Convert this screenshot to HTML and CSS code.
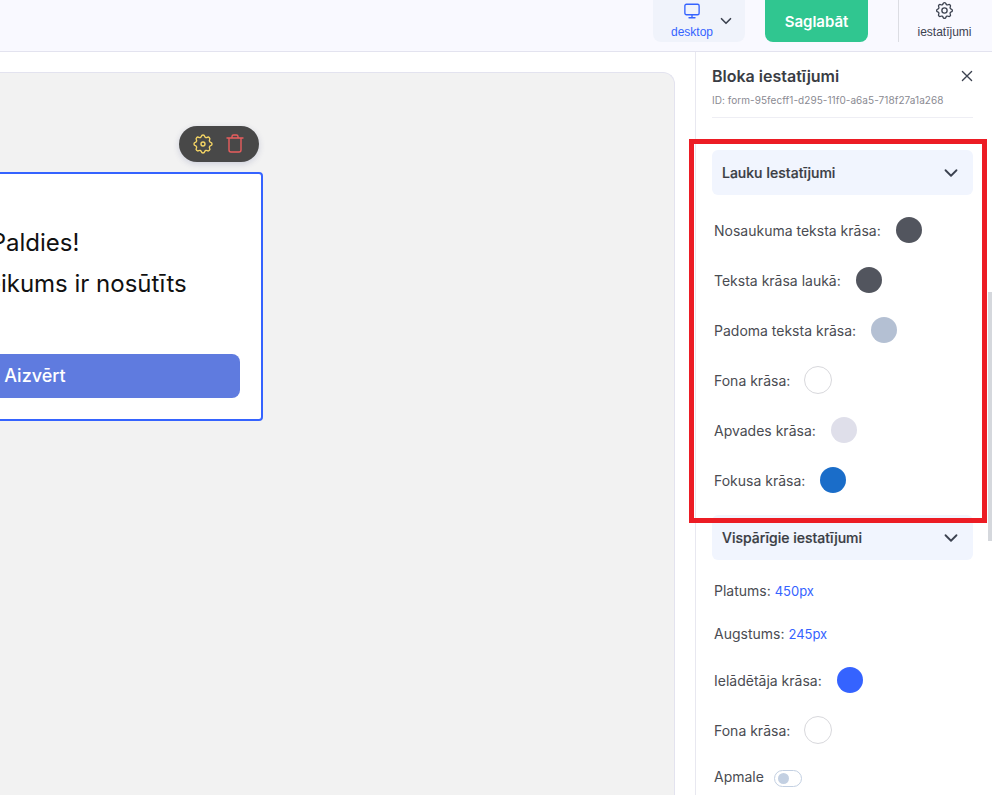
FILE: index.html
```html
<!DOCTYPE html>
<html>
<head>
    <meta charset="UTF-8">
    <title>Bloka iestatījumi</title>
    <link rel="stylesheet" href="styles.css">
</head>
<body>
    <header class="topbar">
        <div class="device">
            <div class="device-label">
                <svg width="18" height="18" viewBox="0 0 24 24" fill="none" stroke="#3563ff" stroke-width="1.800" stroke-linecap="round" stroke-linejoin="round"><rect x="2.500" y="3" width="19" height="14" rx="2"/><path d="M8 21h8M12 17v4"/></svg>
                <span>desktop</span>
            </div>
            <svg class="chevron" width="18" height="18" viewBox="0 0 24 24" fill="none" stroke="#3c4250" stroke-width="2.200" stroke-linecap="round" stroke-linejoin="round"><path d="M6 9l6 6 6-6"/></svg>
        </div>
        <button class="save">Saglabāt</button>
        <div class="settings">
            <svg width="21" height="21" viewBox="0 0 24 24" fill="none" stroke="#3c4250" stroke-width="1.500" stroke-linecap="round" stroke-linejoin="round"><path d="M10.325 4.317c.426-1.756 2.924-1.756 3.350 0a1.724 1.724 0 0 0 2.573 1.066c1.543-.94 3.310.826 2.370 2.370a1.724 1.724 0 0 0 1.065 2.572c1.756.426 1.756 2.924 0 3.350a1.724 1.724 0 0 0-1.066 2.573c.94 1.543-.826 3.310-2.370 2.370a1.724 1.724 0 0 0-2.572 1.065c-.426 1.756-2.924 1.756-3.350 0a1.724 1.724 0 0 0-2.573-1.066c-1.543.94-3.310-.826-2.370-2.370a1.724 1.724 0 0 0-1.065-2.572c-1.756-.426-1.756-2.924 0-3.350a1.724 1.724 0 0 0 1.066-2.573c-.94-1.543.826-3.310 2.370-2.370 1 .608 2.296.07 2.572-1.065z"/><circle cx="12" cy="12" r="3"/></svg>
            <span>iestatījumi</span>
        </div>
    </header>

    <div class="main">
        <div class="canvas-area">
            <div class="canvas">
                <div class="block">
                    <div class="block-tools">
                        <svg width="24" height="24" viewBox="0 0 24 24" fill="none" stroke="#f5d565" stroke-width="1.400" stroke-linecap="round" stroke-linejoin="round"><path d="M10.325 4.317c.426-1.756 2.924-1.756 3.350 0a1.724 1.724 0 0 0 2.573 1.066c1.543-.94 3.310.826 2.370 2.370a1.724 1.724 0 0 0 1.065 2.572c1.756.426 1.756 2.924 0 3.350a1.724 1.724 0 0 0-1.066 2.573c.94 1.543-.826 3.310-2.370 2.370a1.724 1.724 0 0 0-2.572 1.065c-.426 1.756-2.924 1.756-3.350 0a1.724 1.724 0 0 0-2.573-1.066c-1.543.94-3.310-.826-2.370-2.370a1.724 1.724 0 0 0-1.065-2.572c-1.756-.426-1.756-2.924 0-3.350a1.724 1.724 0 0 0 1.066-2.573c-.94-1.543.826-3.310 2.370-2.370 1 .608 2.296.07 2.572-1.065z"/><circle cx="12" cy="12" r="2"/></svg>
                        <svg width="24" height="24" viewBox="0 0 24 24" fill="none" stroke="#e85d5d" stroke-width="1.400" stroke-linecap="round" stroke-linejoin="round"><path d="M4 6h16M9 6V4.500A1.500 1.500 0 0 1 10.500 3h3A1.500 1.500 0 0 1 15 4.500V6M6 6v12a2 2 0 0 0 2 2h8a2 2 0 0 0 2-2V6"/></svg>
                    </div>
                    <div class="thanks">
                        <p>Paldies!</p>
                        <p>Jūsu pieteikums ir nosūtīts</p>
                    </div>
                    <button class="close-btn">Aizvērt</button>
                </div>
            </div>
        </div>

        <aside class="sidebar">
            <div class="side-head">
                <div class="side-title">
                    <h2>Bloka iestatījumi</h2>
                    <svg class="close-x" width="20" height="20" viewBox="0 0 24 24" fill="none" stroke="#3c4250" stroke-width="1.600" stroke-linecap="round"><path d="M6.500 6.500l11 11M17.500 6.500l-11 11"/></svg>
                </div>
                <p class="block-id">ID: form-95fecff1-d295-11f0-a6a5-718f27a1a268</p>
            </div>

            <div class="section">
                <span>Lauku Iestatījumi</span>
                <svg width="22" height="22" viewBox="0 0 24 24" fill="none" stroke="#3c4250" stroke-width="2" stroke-linecap="round" stroke-linejoin="round"><path d="M6 9l6 6 6-6"/></svg>
            </div>
            <div class="rows">
                <div class="row"><span>Nosaukuma teksta krāsa:</span><i class="swatch c-dark"></i></div>
                <div class="row"><span>Teksta krāsa laukā:</span><i class="swatch c-dark"></i></div>
                <div class="row"><span>Padoma teksta krāsa:</span><i class="swatch c-hint"></i></div>
                <div class="row"><span>Fona krāsa:</span><i class="swatch c-white"></i></div>
                <div class="row"><span>Apvades krāsa:</span><i class="swatch c-border"></i></div>
                <div class="row"><span>Fokusa krāsa:</span><i class="swatch c-focus"></i></div>
            </div>

            <div class="section section-second">
                <span>Vispārīgie iestatījumi</span>
                <svg width="22" height="22" viewBox="0 0 24 24" fill="none" stroke="#3c4250" stroke-width="2" stroke-linecap="round" stroke-linejoin="round"><path d="M6 9l6 6 6-6"/></svg>
            </div>
            <div class="values">
                <div class="value-row">Platums: <a href="#">450px</a></div>
                <div class="value-row">Augstums: <a href="#">245px</a></div>
            </div>
            <div class="rows rows-tight">
                <div class="row"><span>Ielādētāja krāsa:</span><i class="swatch c-loader"></i></div>
                <div class="row"><span>Fona krāsa:</span><i class="swatch c-white"></i></div>
                <div class="row row-short"><span>Apmale</span><i class="toggle"><b></b></i></div>
            </div>
        </aside>
    </div>

    <div class="highlight"></div>
    <div class="scrollbar"></div>
</body>
</html>
```

FILE: styles.css
```css
* {
    margin: 0;
    padding: 0;
    box-sizing: border-box;
}
html, body {
    height: 795px;
    overflow: hidden;
}
body {
    font-family: Inter, "Liberation Sans", sans-serif;
    color: #3a3d44;
    background-color: #fff;
}
.topbar {
    display: flex;
    justify-content: flex-end;
    height: 52px;
    background-color: #f9f9ff;
    border-bottom: 1px solid #e3e3ef;
}
.device {
    display: flex;
    align-items: center;
    gap: 4px;
    width: 92px;
    height: 42px;
    padding-left: 18px;
    margin-right: 20px;
    background-color: #f0f3fb;
    border-radius: 0 0 8px 8px;
}
.device-label {
    display: flex;
    flex-direction: column;
    align-items: center;
    gap: 5px;
    padding-bottom: 2px;
    font-family: "Liberation Sans", sans-serif;
    font-size: 12px;
    color: #3563ff;
}
.save {
    width: 103px;
    height: 42px;
    margin-right: 30px;
    border: 0;
    border-radius: 0 0 8px 8px;
    background-color: #30c690;
    color: #fff;
    font-family: Inter, sans-serif;
    font-size: 15px;
    font-weight: 600;
}
.settings {
    display: flex;
    flex-direction: column;
    align-items: center;
    gap: 4px;
    width: 94px;
    height: 42px;
    padding-right: 2px;
    border-left: 1px solid #dcdde3;
    font-family: "Liberation Sans", sans-serif;
    font-size: 12px;
    color: #3c4250;
}
.main {
    display: flex;
    height: 743px;
}
.canvas-area {
    flex: 1;
    padding: 20px 20px 0 0;
}
.canvas {
    position: relative;
    height: 100%;
    background-color: #f2f2f2;
    border: 1px solid #e3e3ef;
    border-left: 0;
    border-bottom: 0;
    border-radius: 0 12px 0 0;
}
.block {
    position: absolute;
    left: -187px;
    top: 99px;
    display: flex;
    flex-direction: column;
    align-items: center;
    width: 450px;
    height: 249px;
    padding: 48px 21px 21px 15px;
    background-color: #fff;
    border: 2px solid #3563ff;
    border-radius: 4px;
}
.block-tools {
    position: absolute;
    top: -48px;
    right: 2px;
    display: flex;
    align-items: center;
    justify-content: center;
    gap: 8px;
    width: 80px;
    height: 36px;
    border-radius: 18px;
    background-color: #484848;
    box-shadow: 0 2px 6px rgba(60, 70, 130, .2);
}
.thanks {
    flex: 1;
    font-size: 24px;
    line-height: 41px;
    color: #111;
    text-align: center;
}
.close-btn {
    width: 100%;
    height: 44px;
    padding-bottom: 2px;
    border: 0;
    border-radius: 8px;
    background-color: #5f7bdf;
    color: #fff;
    font-family: Inter, sans-serif;
    font-size: 18px;
    font-weight: 500;
}
.sidebar {
    width: 297px;
    padding: 0 19px 0 16px;
    background-color: #fff;
    border-left: 1px solid #e8e8f0;
}
.side-head {
    height: 66px;
    margin-bottom: 32px;
    padding-top: 14px;
    border-bottom: 1px solid #eeeef4;
}
.side-title {
    display: flex;
    align-items: center;
    justify-content: space-between;
}
.side-title h2 {
    font-size: 16px;
    font-weight: 600;
    line-height: 20px;
}
.close-x {
    margin-right: -4px;
}
.block-id {
    margin-top: 8px;
    font-size: 10px;
    letter-spacing: .05px;
    color: #8a8a92;
}
.section {
    display: flex;
    align-items: center;
    justify-content: space-between;
    height: 45px;
    padding: 0 11px 0 10px;
    background-color: #f1f5fe;
    border-radius: 6px;
    font-size: 14px;
    font-weight: 500;
    -webkit-text-stroke: .2px #3a3d44;
}
.section-second {
    margin-top: 10px;
}
.rows {
    padding: 10px 2px 0;
}
.row {
    display: flex;
    align-items: center;
    gap: 15px;
    height: 50px;
    font-size: 14px;
    color: #4a4c52;
}
.row-short {
    height: 43px;
}
.swatch {
    width: 26px;
    height: 26px;
    border-radius: 50%;
}
.c-dark {
    background-color: #52555e;
}
.c-hint {
    background-color: #b4c0d3;
}
.c-white {
    width: 28px;
    height: 28px;
    margin-left: -1px;
    background-color: #fff;
    border: 1px solid #d8d8dc;
}
.c-border {
    background-color: #dfdfea;
}
.c-focus {
    background-color: #1a6dc9;
}
.c-loader {
    background-color: #3563ff;
}
.values {
    padding: 9px 2px 0;
}
.value-row {
    height: 43px;
    line-height: 43px;
    font-size: 14px;
    color: #4a4c52;
}
.value-row a {
    font-size: 13px;
    color: #3563ff;
    text-decoration: none;
}
.rows-tight {
    padding-top: 0;
}
.toggle {
    position: relative;
    width: 28px;
    height: 17px;
    margin: 3px 0 0 -5px;
    border: 1px solid #c3d0e2;
    border-radius: 9px;
    background-color: #fff;
}
.toggle b {
    position: absolute;
    top: 2px;
    left: 3px;
    width: 11px;
    height: 11px;
    border-radius: 50%;
    background-color: #c3d0e2;
}
.highlight {
    position: absolute;
    left: 689px;
    top: 139px;
    width: 298px;
    height: 384px;
    border: 5px solid #ec1c24;
    pointer-events: none;
}
.scrollbar {
    position: absolute;
    right: 0;
    top: 292px;
    width: 4px;
    height: 249px;
    background-color: #d5d8dd;
}
```
